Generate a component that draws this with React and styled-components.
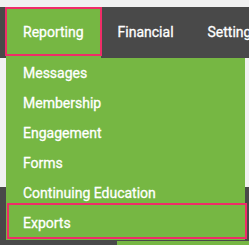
import React from 'react';
import styled, { createGlobalStyle } from 'styled-components';

const GlobalStyle = createGlobalStyle`
  html, body {
    margin: 0;
    padding: 0;
    background: #f1f1f1;
    font-family: Roboto, "Liberation Sans", sans-serif;
    overflow: hidden;
  }
`;

const Page = styled.div`
  position: relative;
  width: 249px;
  height: 245px;
  padding-top: 7px;
  box-sizing: border-box;
  overflow: hidden;
`;

const NavBar = styled.div`
  display: flex;
  height: 51px;
  padding-left: 6px;
  background: #494949;
  overflow: hidden;
`;

const Tab = styled.div`
  position: relative;
  display: flex;
  align-items: center;
  padding: 0 17px 1px;
  font-size: 14px;
  font-weight: 400;
  -webkit-text-stroke: 0.3px #fff;
  color: #fff;
  white-space: nowrap;
  background: ${(p) => (p.active ? '#76b743' : 'transparent')};

  ${(p) =>
    p.highlight &&
    `
    &::after {
      content: '';
      position: absolute;
      left: -1px;
      right: -1px;
      top: 0;
      bottom: 2px;
      border: 2.5px solid #ef2d68;
    }
  `}
`;

const LowerBar = styled.div`
  margin-top: 129px;
  height: 58px;
  background: #494949;
  display: flex;
  align-items: flex-end;
`;

const LowerTab = styled.div`
  margin-left: 117px;
  width: 132px;
  height: 4px;
  background: #76b743;
`;

const Dropdown = styled.ul`
  position: absolute;
  top: 58px;
  left: 6px;
  width: 239px;
  margin: 0;
  padding: 0 0 2px;
  list-style: none;
  background: #76b743;
`;

const Item = styled.li`
  position: relative;
  height: 30px;
  display: flex;
  align-items: center;
  padding-left: 17px;
  font-size: 14px;
  font-weight: 400;
  -webkit-text-stroke: 0.3px #fff;
  color: #fff;

  ${(p) =>
    p.highlight &&
    `
    &::after {
      content: '';
      position: absolute;
      left: 1px;
      right: -2px;
      top: -5px;
      bottom: -1px;
      border: 2.5px solid #ef2d68;
    }
  `}
`;

const items = ['Messages', 'Membership', 'Engagement', 'Forms', 'Continuing Education', 'Exports'];

export default function App() {
  return (
    <>
      <GlobalStyle />
      <Page>
        <NavBar>
          <Tab active highlight>Reporting</Tab>
          <Tab>Financial</Tab>
          <Tab>Settings</Tab>
        </NavBar>
        <LowerBar>
          <LowerTab />
        </LowerBar>
        <Dropdown>
          {items.map((name) => (
            <Item key={name} highlight={name === 'Exports'}>
              {name}
            </Item>
          ))}
        </Dropdown>
      </Page>
    </>
  );
}
